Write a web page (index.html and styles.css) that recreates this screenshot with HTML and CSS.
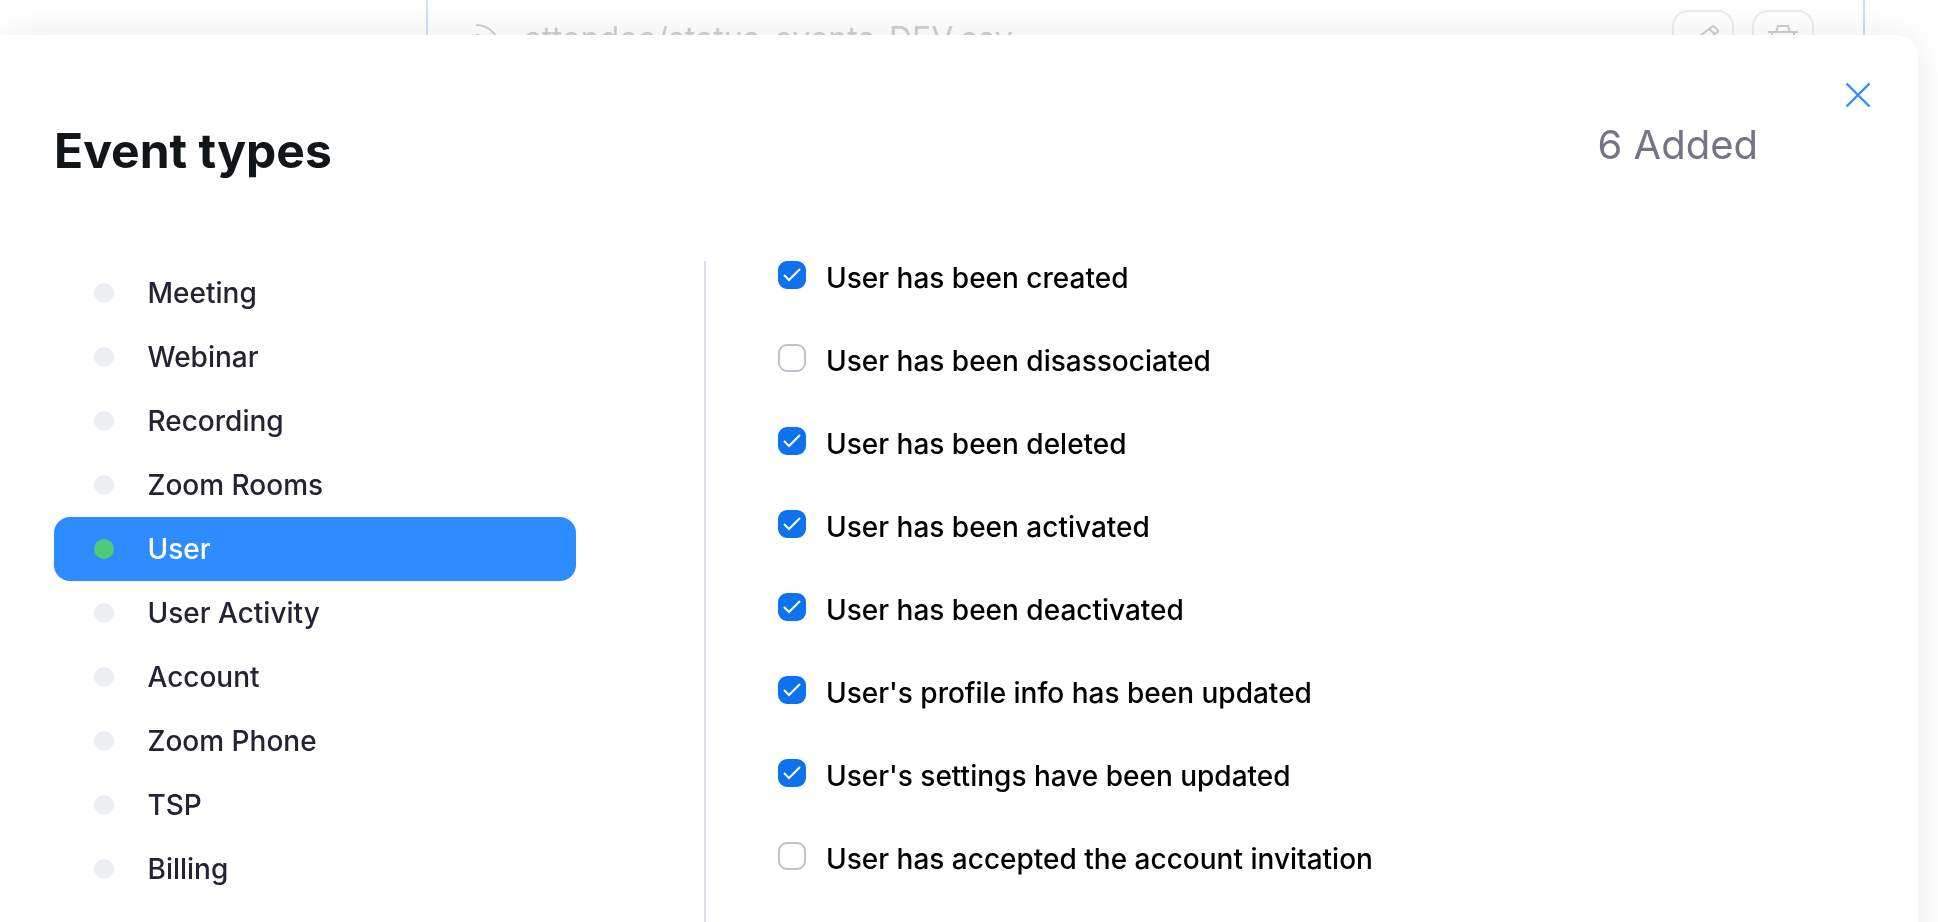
FILE: index.html
```html
<!DOCTYPE html>
<html lang="en">
<head>
<meta charset="utf-8">
<title>Event types</title>
<link rel="stylesheet" href="styles.css">
</head>
<body>
<div class="page">
  <div class="file-row">
    <svg class="feed-icon" width="30" height="30" viewBox="0 0 30 30" fill="none" stroke="#707070" stroke-width="2"><path d="M1 1c12 0 22 9 24 22"/><path d="M1 11c7 0 12 5 13 12"/></svg>
    <span class="file-name">attendee/status-events-DEV.csv</span>
    <div class="file-actions">
      <span class="file-btn"><svg width="32" height="30" viewBox="0 0 32 30" fill="none" stroke="#707070" stroke-width="2"><path d="M14 10 26 1 32 6 20 15"/><path d="M22 4 28 9"/><path d="M14 10 8 26l12-11"/></svg></span>
      <span class="file-btn"><svg width="34" height="30" viewBox="0 0 34 30" fill="none" stroke="#707070" stroke-width="2"><path d="M2 7h30M10 7l2-6h10l2 6M6 7v20h22V7"/></svg></span>
    </div>
  </div>
</div>
<div class="shade"></div>
<main class="modal">
  <button class="close" aria-label="Close">
    <svg width="26" height="26" viewBox="0 0 26 26" fill="none" stroke="#2d8cff" stroke-width="2.400"><path d="M1.500 1.500 24.500 24.500M24.500 1.500 1.500 24.500"/></svg>
  </button>
  <header class="modal-head">
    <h1 class="title">Event types</h1>
    <span class="count">6 Added</span>
  </header>
  <div class="modal-body">
    <ul class="nav">
      <li class="nav-item"><i class="dot"></i>Meeting</li>
      <li class="nav-item"><i class="dot"></i>Webinar</li>
      <li class="nav-item"><i class="dot"></i>Recording</li>
      <li class="nav-item"><i class="dot"></i>Zoom Rooms</li>
      <li class="nav-item active"><i class="dot"></i>User</li>
      <li class="nav-item"><i class="dot"></i>User Activity</li>
      <li class="nav-item"><i class="dot"></i>Account</li>
      <li class="nav-item"><i class="dot"></i>Zoom Phone</li>
      <li class="nav-item"><i class="dot"></i>TSP</li>
      <li class="nav-item"><i class="dot"></i>Billing</li>
    </ul>
    <ul class="events">
      <li class="event"><span class="box on"><svg width="20" height="16" viewBox="0 0 20 16" fill="none" stroke="#fff" stroke-width="2"><path d="M2 8 7 13 18 2"/></svg></span>User has been created</li>
      <li class="event"><span class="box"></span>User has been disassociated</li>
      <li class="event"><span class="box on"><svg width="20" height="16" viewBox="0 0 20 16" fill="none" stroke="#fff" stroke-width="2"><path d="M2 8 7 13 18 2"/></svg></span>User has been deleted</li>
      <li class="event"><span class="box on"><svg width="20" height="16" viewBox="0 0 20 16" fill="none" stroke="#fff" stroke-width="2"><path d="M2 8 7 13 18 2"/></svg></span>User has been activated</li>
      <li class="event"><span class="box on"><svg width="20" height="16" viewBox="0 0 20 16" fill="none" stroke="#fff" stroke-width="2"><path d="M2 8 7 13 18 2"/></svg></span>User has been deactivated</li>
      <li class="event"><span class="box on"><svg width="20" height="16" viewBox="0 0 20 16" fill="none" stroke="#fff" stroke-width="2"><path d="M2 8 7 13 18 2"/></svg></span>User's profile info has been updated</li>
      <li class="event"><span class="box on"><svg width="20" height="16" viewBox="0 0 20 16" fill="none" stroke="#fff" stroke-width="2"><path d="M2 8 7 13 18 2"/></svg></span>User's settings have been updated</li>
      <li class="event"><span class="box"></span>User has accepted the account invitation</li>
    </ul>
  </div>
</main>
</body>
</html>
```

FILE: styles.css
```css
* { box-sizing: border-box; }
html, body { margin: 0; height: 100%; overflow: hidden; }
body { font-family: Inter, "Liberation Sans", sans-serif; background: #fff; }

.page {
  margin: 0 73px 0 426px;
  height: 100%;
  border-left: 2px solid #76a6e8;
  border-right: 2px solid #76a6e8;
  padding: 10px 49px 0 47px;
}
.file-row { display: flex; align-items: flex-start; }
.feed-icon { margin-top: 14px; flex: none; }
.file-name { margin-left: 19px; font-size: 32px; line-height: 38px; margin-top: 10px; color: #787878; }
.file-actions { margin-left: auto; display: flex; gap: 18px; }
.file-btn {
  width: 62px; height: 62px;
  border: 2px solid #c8c8c8;
  border-radius: 16px;
  display: flex; justify-content: center; align-items: flex-start;
  padding-top: 13px;
}

.shade {
  position: fixed; inset: 0;
  background: rgba(255,255,255,.65);
}

.modal {
  position: fixed; left: 0; top: 35px; right: 20px; bottom: -40px;
  background: #fff;
  border-radius: 0 22px 0 0;
  box-shadow: 0 0 40px rgba(0,0,0,.08);
  padding: 0 0 0 54px;
}
.close {
  position: absolute; top: 47px; right: 47px;
  width: 26px; height: 26px; padding: 0; border: 0; background: none; display: block;
}
.close svg { display: block; }
.modal-head { display: flex; justify-content: space-between; height: 226px; padding-right: 160px; }
.title { margin: 86px 0 0; font-size: 48px; line-height: 60px; font-weight: 700; color: #131619; }
.count { margin-top: 84px; font-size: 40px; line-height: 52px; color: #747487; }

.modal-body { display: flex; }
.nav { list-style: none; margin: 0; padding: 0; width: 522px; }
.nav-item {
  height: 64px;
  display: flex; align-items: center;
  padding-left: 40px;
  border-radius: 16px;
  font-size: 28px; font-weight: 500;
  color: #232333;
}
.dot { width: 20px; height: 20px; border-radius: 50%; background: #ededf4; margin-right: 33.500px; flex: none; }
.nav-item.active { background: #2d8cff; color: #fff; }
.nav-item.active .dot { background: #4ccb78; }

.events {
  list-style: none; margin: 0 0 0 128px; padding: 0 0 0 72px;
  border-left: 2px solid #dcdcf0;
  height: 800px;
}
.event {
  height: 83px;
  display: flex; align-items: flex-start;
  font-size: 28px; font-weight: 500; line-height: 35px;
  color: #000;
}
.box {
  width: 28px; height: 28px; margin-right: 20px;
  border: 2px solid #bfbfd0; border-radius: 9px; flex: none;
  display: flex; align-items: center; justify-content: center;
}
.box.on { background: #0e72ed; border-color: #0e72ed; }
.box svg { display: block; }
```
